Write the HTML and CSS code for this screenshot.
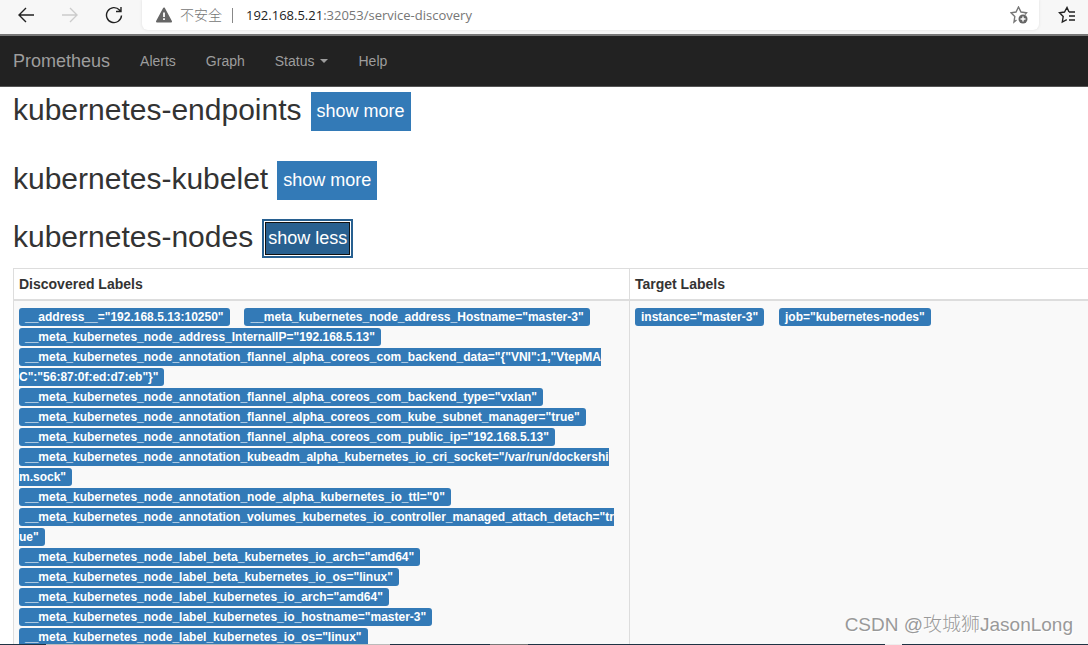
FILE: index.html
```html
<!DOCTYPE html>
<html lang="en">
<head>
<meta charset="utf-8">
<title>Prometheus</title>
<link rel="stylesheet" href="styles.css">
</head>
<body>
<div class="browser">
  <button class="tool" aria-label="Back"><svg width="18" height="18" viewBox="0 0 18 18"><path d="M17 9H2M9 2L2 9l7 7"/></svg></button>
  <button class="tool tool-off" aria-label="Forward"><svg width="18" height="18" viewBox="0 0 18 18"><path d="M1 9h15M9 2l7 7-7 7"/></svg></button>
  <button class="tool" aria-label="Reload"><svg width="18" height="18" viewBox="0 0 18 18"><path d="M16.500 9.500A7.500 7.500 0 1 1 14.500 4L16 5.500M16 1v4.500h-5"/></svg></button>
  <div class="address">
    <svg class="warn" width="18" height="16" viewBox="0 0 18 16"><path d="M9 1.500L16 14.500H2z" fill="#666" stroke="#666" stroke-width="2" stroke-linejoin="round"/><path d="M9 5.500v4.500M9 11.300v1.700" stroke="#fff" stroke-width="1.800"/></svg>
    <span class="insecure">不安全</span>
    <span class="divider"></span>
    <span class="url"><span class="host">192.168.5.21</span>:32053/service-discovery</span>
    <button class="tool star-add" aria-label="Add favorite"><svg width="19" height="19" viewBox="0 0 19 19"><path d="M6.500 14L4 16l.8-5.500L1 6.800l5-.8L8.500 1 11 6l5.500.8-1.500 1.700"/><circle cx="13" cy="13" r="4.500" class="disc"/><path d="M10.500 13h5M13 10.500v5" class="plus"/></svg></button>
  </div>
  <button class="tool favorites" aria-label="Favorites"><svg width="18" height="18" viewBox="0 0 18 18"><path d="M11 6L9 1.500 6.500 6l-5 .7 3.700 3.800-.9 5.500 4.500-2.300M11 6h6M11 10h6M11 14h6"/></svg></button>
</div>
<nav class="navbar">
  <a class="brand" href="#">Prometheus</a>
  <a href="#">Alerts</a>
  <a href="#">Graph</a>
  <a class="drop" href="#">Status<span class="caret"></span></a>
  <a href="#">Help</a>
</nav>
<main>
  <h2 class="job job-collapsed">kubernetes-endpoints <button class="toggle">show more</button></h2>
  <h2 class="job">kubernetes-kubelet <button class="toggle">show more</button></h2>
  <h2 class="job">kubernetes-nodes <button class="toggle toggle-focus">show less</button></h2>
  <table>
    <thead><tr><th class="discovered">Discovered Labels</th><th>Target Labels</th></tr></thead>
    <tbody><tr>
      <td>
        <span class="label">__address__="192.168.5.13:10250"</span>
        <span class="label">__meta_kubernetes_node_address_Hostname="master-3"</span>
        <span class="label">__meta_kubernetes_node_address_InternalIP="192.168.5.13"</span>
        <span class="label">__meta_kubernetes_node_annotation_flannel_alpha_coreos_com_backend_data="{"VNI":1,"VtepMA<br>C":"56:87:0f:ed:d7:eb"}"</span>
        <span class="label">__meta_kubernetes_node_annotation_flannel_alpha_coreos_com_backend_type="vxlan"</span>
        <span class="label">__meta_kubernetes_node_annotation_flannel_alpha_coreos_com_kube_subnet_manager="true"</span>
        <span class="label">__meta_kubernetes_node_annotation_flannel_alpha_coreos_com_public_ip="192.168.5.13"</span>
        <span class="label">__meta_kubernetes_node_annotation_kubeadm_alpha_kubernetes_io_cri_socket="/var/run/dockershi<br>m.sock"</span><br>
        <span class="label">__meta_kubernetes_node_annotation_node_alpha_kubernetes_io_ttl="0"</span>
        <span class="label">__meta_kubernetes_node_annotation_volumes_kubernetes_io_controller_managed_attach_detach="tr<br>ue"</span><br>
        <span class="label">__meta_kubernetes_node_label_beta_kubernetes_io_arch="amd64"</span>
        <span class="label">__meta_kubernetes_node_label_beta_kubernetes_io_os="linux"</span>
        <span class="label">__meta_kubernetes_node_label_kubernetes_io_arch="amd64"</span>
        <span class="label">__meta_kubernetes_node_label_kubernetes_io_hostname="master-3"</span>
        <span class="label">__meta_kubernetes_node_label_kubernetes_io_os="linux"</span>
      </td>
      <td>
        <span class="label">instance="master-3"</span>
        <span class="label">job="kubernetes-nodes"</span>
      </td>
    </tr></tbody>
  </table>
</main>
<div class="taskbar"></div>
<div class="watermark">CSDN @攻城狮JasonLong</div>
</body>
</html>
```
FILE: styles.css
```css
* { box-sizing: border-box; }

body {
  margin: 0;
  height: 100vh;
  display: flex;
  flex-direction: column;
  overflow: hidden;
  background: #fff;
  color: #333;
  font: 14px/20px "Liberation Sans", Arial, sans-serif;
}

button { font-family: inherit; cursor: pointer; }

.browser {
  flex: none;
  height: 36px;
  display: flex;
  align-items: flex-start;
  padding-left: 17px;
  background: #f7f7f7;
  border-bottom: 2px solid #777;
}

.tool {
  flex: none;
  width: 18px;
  height: 30px;
  margin-right: 26px;
  padding: 0;
  border: 0;
  background: none;
  display: flex;
  align-items: center;
  color: #222;
}

.tool svg {
  flex: none;
  fill: none;
  stroke: currentColor;
  stroke-width: 1.4;
}

.tool-off { color: #ccc; }

.address {
  flex: 1;
  height: 30px;
  margin-left: -7px;
  padding: 0 10px 0 13px;
  display: flex;
  align-items: center;
  background: #fff;
  border-radius: 0 0 6px 6px;
  box-shadow: 0 0 3px #ddd;
  font-size: 14px;
  color: #767676;
}

.insecure {
  margin-left: 7px;
  padding-bottom: 2px;
  font-family: "Noto Sans CJK SC", sans-serif;
  font-weight: 300;
}

.divider {
  width: 1px;
  height: 15px;
  margin: 0 13px 0 10px;
  background: #888;
}

.url { font-family: "Open Sans", sans-serif; font-size: 13px; }
.host { color: #222; }

.star-add {
  width: 19px;
  margin: 0 0 0 auto;
  color: #777;
}

.star-add .disc { fill: #666; stroke: none; }
.star-add .plus { stroke: #fff; }

.favorites { margin: 0 12px 0 19px; }

.navbar {
  flex: none;
  height: 51px;
  display: flex;
  align-items: center;
  gap: 30px;
  padding-left: 13px;
  background: #222;
  border-bottom: 1px solid #555;
}

.navbar a { color: #9d9d9d; text-decoration: none; }
.navbar .brand { font-size: 18px; }
.drop { display: flex; align-items: center; gap: 6px; }

.caret {
  border: 4px solid transparent;
  border-top-color: currentColor;
  border-bottom: 0;
}

main {
  flex: 1;
  min-height: 0;
  overflow: hidden;
  padding: 5px 0 0 13px;
}

.job {
  display: flex;
  align-items: flex-start;
  gap: 9px;
  margin: 0 0 19px;
  font-size: 30px;
  line-height: 36px;
  font-weight: 400;
}

.job-collapsed { margin-bottom: 30px; }

.toggle {
  height: 39px;
  padding: 0 5px;
  border: 1px solid #337ab7;
  background: #337ab7;
  color: #fff;
  font-size: 18px;
}

.toggle-focus {
  border-color: #286090;
  background: #286090;
  outline: 1px solid #fff;
  outline-offset: -3px;
  box-shadow: inset 0 0 0 1px #286090, inset 0 0 0 3px #111;
}

table {
  width: 100%;
  margin-top: -9px;
  table-layout: fixed;
  border-collapse: separate;
  border-spacing: 0;
  border-top: 1px solid #ddd;
}

th, td {
  border-left: 1px solid #ddd;
  padding: 5px;
  text-align: left;
  vertical-align: top;
}

th { border-bottom: 2px solid #ddd; }
td { background: #f9f9f9; }
.discovered { width: 57.3%; }

.label {
  margin-right: 11px;
  padding: 2px 6px;
  border-radius: 3px;
  background: #337ab7;
  color: #fff;
  font-size: 12px;
  line-height: 12px;
  font-weight: 700;
  white-space: nowrap;
}

.taskbar {
  flex: none;
  height: 1px;
  background: linear-gradient(to right, #1f3344 4.2%, #bbb 4.2% 35.8%, #1f3344 35.8% 45%, #777 45% 48.5%, #1f3344 48.5% 81.3%, #eee 81.3% 82.9%, #1f3344 82.9%);
}

.watermark {
  position: absolute;
  right: 15px;
  bottom: 6px;
  font: 300 19px/28px "Liberation Sans", "Noto Sans CJK SC", sans-serif;
  color: #999;
  text-shadow: 1px 1px #fff;
}
```
